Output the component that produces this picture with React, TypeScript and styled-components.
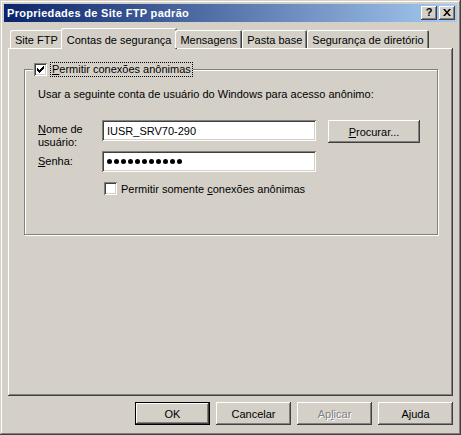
import React from 'react';
import styled, {createGlobalStyle, css} from 'styled-components';

const GlobalStyle = createGlobalStyle`
    html, body {
        margin: 0;
        padding: 0;
        background: #d4d0c8;
    }
    body {
        font-family: "Liberation Sans", Arial, sans-serif;
        font-size: 11px;
        color: #000;
    }
`;

const raised = css`
    box-shadow: inset -1px -1px 0 #404040, inset 1px 1px 0 #ffffff, inset -2px -2px 0 #808080, inset 2px 2px 0 #d4d0c8;
`;

const sunken = css`
    box-shadow: inset 1px 1px 0 #808080, inset -1px -1px 0 #ffffff, inset 2px 2px 0 #404040, inset -2px -2px 0 #d4d0c8;
`;

const tabs = ['Site FTP', 'Contas de segurança', 'Mensagens', 'Pasta base', 'Segurança de diretório'];

const App = () => {
    return <>
        <GlobalStyle/>
        <Window>
            <TitleBar>
                <Title>Propriedades de Site FTP padrão</Title>
                <CaptionButton aria-label="Ajuda">?</CaptionButton>
                <CaptionButton aria-label="Fechar" $close>
                    <svg width="8" height="7" viewBox="0 0 8 7">
                        <path d="M0 0h2l2 2.5L6 0h2L5 3.5 8 7H6L4 4.5 2 7H0l3-3.5z" fill="#000"/>
                    </svg>
                </CaptionButton>
            </TitleBar>

            <Client>
                <TabStrip>
                    {tabs.map((t, i) => <Tab key={t} $active={i === 1}>{t}</Tab>)}
                </TabStrip>

                <TabPanel>
                    <GroupBox>
                        <Legend>
                            <CheckBox $checked/>
                            <FocusLabel><u>P</u>ermitir conexões anônimas</FocusLabel>
                        </Legend>

                        <Hint>Usar a seguinte conta de usuário do Windows para acesso anônimo:</Hint>

                        <FormGrid>
                            <FieldLabel><u>N</u>ome de<br/>usuário:</FieldLabel>
                            <TextBox>IUSR_SRV70-290</TextBox>
                            <Button $width={92} $height={23}><u>P</u>rocurar...</Button>

                            <FieldLabel $single><u>S</u>enha:</FieldLabel>
                            <TextBox>
                                <Dots>{Array.from({length: 11}).map((_, i) => <Dot key={i}/>)}</Dots>
                            </TextBox>
                            <span/>
                        </FormGrid>

                        <CheckRow>
                            <CheckBox/>
                            <span>Permitir somente <u>c</u>onexões anônimas</span>
                        </CheckRow>
                    </GroupBox>
                </TabPanel>

                <ButtonRow>
                    <Button $default>OK</Button>
                    <Button>Cancelar</Button>
                    <Button $disabled>Ap<u>l</u>icar</Button>
                    <Button>Ajuda</Button>
                </ButtonRow>
            </Client>
        </Window>
    </>;
};

export default App;


const Window = styled.div`
    width: 461px;
    height: 435px;
    box-sizing: border-box;
    padding: 4px;
    background: #d4d0c8;
    display: flex;
    flex-direction: column;
    box-shadow: inset -1px -1px 0 #404040, inset 1px 1px 0 #d4d0c8, inset -2px -2px 0 #808080, inset 2px 2px 0 #ffffff;
`;

const TitleBar = styled.div`
    height: 18px;
    display: flex;
    align-items: center;
    padding: 0 2px 0 3px;
    background: linear-gradient(to right, #0a246a, #a6caf0);
    gap: 2px;
`;

const Title = styled.div`
    flex: 1;
    color: #fff;
    font-weight: 700;
    font-size: 11px;
    white-space: nowrap;
    letter-spacing: 0.3px;
`;

const CaptionButton = styled.div<{ $close?: boolean }>`
    width: 16px;
    height: 14px;
    box-sizing: border-box;
    background: #d4d0c8;
    ${raised};
    display: flex;
    align-items: center;
    justify-content: center;
    font-weight: 700;
    font-size: 11px;
    line-height: 1;
    padding-bottom: 1px;
`;

const Client = styled.div`
    flex: 1;
    display: flex;
    flex-direction: column;
    padding: 6px 4px 0 4px;
`;

const TabStrip = styled.div`
    display: flex;
    align-items: flex-end;
    height: 20px;
    padding-left: 2px;
    position: relative;
    z-index: 1;
`;

const Tab = styled.div<{ $active?: boolean }>`
    box-sizing: border-box;
    height: ${p => p.$active ? 21 : 18}px;
    margin-bottom: ${p => p.$active ? -1 : 0}px;
    margin-left: ${p => p.$active ? -2 : 0}px;
    margin-right: ${p => p.$active ? -2 : 0}px;
    padding: ${p => p.$active ? '2px 6px 0 6px' : '1px 5px 0 5px'};
    display: flex;
    align-items: center;
    white-space: nowrap;
    background: #d4d0c8;
    border-radius: 2px 2px 0 0;
    box-shadow: inset 1px 1px 0 #ffffff, inset -1px 0 0 #404040, inset -2px 0 0 #808080;
`;

const TabPanel = styled.div`
    height: 348px;
    box-sizing: border-box;
    padding: 15px 15px 0 16px;
    ${raised};
`;

const GroupBox = styled.div`
    position: relative;
    box-sizing: border-box;
    height: 166px;
    margin-top: 6px;
    border: 1px solid #808080;
    box-shadow: 1px 1px 0 #ffffff, inset 1px 1px 0 #ffffff;
    padding: 18px 0 0 13px;
`;

const Legend = styled.div`
    position: absolute;
    top: -7px;
    left: 8px;
    display: flex;
    align-items: center;
    gap: 4px;
    padding: 0 1px;
    background: #d4d0c8;
`;

const FocusLabel = styled.span`
    outline: 1px dotted #000;
    padding: 0 1px;
    line-height: 13px;
`;

const CheckBox = styled.span<{ $checked?: boolean }>`
    flex: none;
    width: 13px;
    height: 13px;
    box-sizing: border-box;
    background: #fff;
    ${sunken};
    position: relative;
    ${p => p.$checked && css`
        &::after {
            content: '';
            position: absolute;
            left: 3px;
            top: 3px;
            width: 7px;
            height: 7px;
            background: no-repeat url("data:image/svg+xml,%3Csvg xmlns='http://www.w3.org/2000/svg' width='7' height='7'%3E%3Cpath d='M0 2h1v1h1v1h1V3h1V2h1V1h1V0h1v3h-1v1h-1v1h-1v1h-1v1h-1V6H1V5H0z' fill='%23000'/%3E%3C/svg%3E");
        }
    `}
`;

const Hint = styled.div`
    line-height: 13px;
    margin-bottom: 19px;
`;

const FormGrid = styled.div`
    display: grid;
    grid-template-columns: 52px 214px 92px;
    grid-template-rows: 23px 21px;
    column-gap: 12px;
    row-gap: 8px;
    align-items: start;
`;

const FieldLabel = styled.div<{ $single?: boolean }>`
    line-height: 13px;
    padding-top: ${p => p.$single ? 4 : 3}px;
`;

const TextBox = styled.div`
    height: 21px;
    box-sizing: border-box;
    background: #fff;
    ${sunken};
    padding: 0 5px;
    display: flex;
    align-items: center;
`;

const Dots = styled.div`
    display: flex;
    gap: 2px;
`;

const Dot = styled.span`
    width: 5px;
    height: 5px;
    border-radius: 50%;
    background: #000;
`;

const CheckRow = styled.div`
    display: flex;
    align-items: center;
    gap: 4px;
    margin: 10px 0 0 66px;
`;

const ButtonRow = styled.div`
    display: flex;
    justify-content: flex-end;
    gap: 6px;
    padding-top: 6px;
    padding-right: 0;
`;

const Button = styled.div<{ $default?: boolean; $disabled?: boolean; $width?: number; $height?: number }>`
    width: ${p => p.$width ?? 75}px;
    height: ${p => p.$height ?? 23}px;
    box-sizing: border-box;
    display: flex;
    align-items: center;
    justify-content: center;
    background: #d4d0c8;
    ${raised};
    ${p => p.$default && css`
        box-shadow: inset 0 0 0 1px #000, inset -2px -2px 0 #404040, inset 2px 2px 0 #ffffff, inset -3px -3px 0 #808080;
    `}
    ${p => p.$disabled && css`
        color: #808080;
        text-shadow: 1px 1px 0 #ffffff;
    `}
`;
